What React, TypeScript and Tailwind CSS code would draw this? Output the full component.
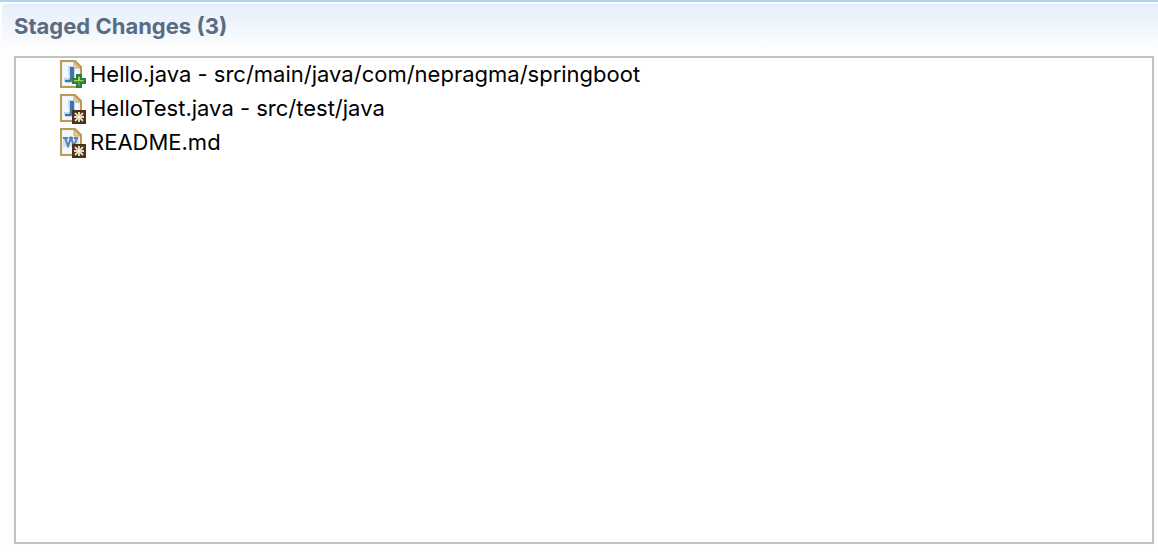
import React from "react";

type Kind = "java" | "text";
type Status = "added" | "modified";

interface StagedFile {
  label: string;
  kind: Kind;
  status: Status;
}

const files: StagedFile[] = [
  { label: "Hello.java - src/main/java/com/nepragma/springboot", kind: "java", status: "added" },
  { label: "HelloTest.java - src/test/java", kind: "java", status: "modified" },
  { label: "README.md", kind: "text", status: "modified" },
];

function FileIcon({ kind, status }: { kind: Kind; status: Status }) {
  return (
    <svg viewBox="0 0 28 32" className="h-8 w-7 shrink-0" aria-hidden="true">
      <path d="M2 2h15l7 7v21H2z" fill="#e9f1fb" />
      <path d="M5 5h10v5h6v17H5z" fill="#f3f8fe" />
      <path d="M3 3h14l6 6v20H3z" fill="none" stroke="#bd9a50" strokeWidth="2" />
      <path d="M16 4v6h6z" fill="#e6cf8e" stroke="#cdae6a" strokeWidth="1" />
      {kind === "java" ? (
        <>
          <path d="M10 8h7v13l-3 4H8l-2-2v-3h5z" fill="#c3d6ec" />
          <path d="M12 9h4v11c0 3-2 4-4 4H7v-2h3c2 0 2-1 2-3z" fill="#3f74ad" />
        </>
      ) : (
        <>
          <path d="M5 11h16v10H5z" fill="#d3e0f0" />
          <path
            d="M5 12h5M11 12h4M16 12h4M7 12l3 8 3-8 3 8 3-8"
            fill="none"
            stroke="#5782b5"
            strokeWidth="2"
          />
        </>
      )}
      {status === "added" ? (
        <>
          <path d="M18 16h6v4h4v6h-4v4h-6v-4h-4v-6h4z" fill="#2a7d45" />
          <path d="M20 18h2v4h4v2h-4v4h-2v-4h-4v-2h4z" fill="#4f9a4c" />
          <path d="M20 19h2v3h3v1H16v-1h4z" fill="#a9cf66" />
        </>
      ) : (
        <>
          <path d="M14 18h14v14H14z" fill="#49301f" />
          <path
            d="M21 20v10M16 25h10M17 21l8 8M25 21l-8 8"
            fill="none"
            stroke="#e6d6b8"
            strokeWidth="2"
          />
          <path d="M20 24h2v2h-2z" fill="#fffbe9" />
        </>
      )}
    </svg>
  );
}

export default function App() {
  return (
    <section className="flex min-h-screen flex-col bg-[#fdfdfd] font-['Inter','Liberation_Sans',sans-serif]">
      <header className="border-t-2 border-[#b1d1f3]">
        <div className="ml-0.5 mt-0.5 h-11 rounded-tl-sm bg-linear-to-b from-[#e4eefb] to-[#fdfdfd] px-3 pt-1">
          <h1 className="text-[22px] leading-9 font-bold text-[#586c84]">Staged Changes (3)</h1>
        </div>
      </header>
      <ul className="mt-2 mr-1 mb-2 ml-3.5 flex-1 border-2 border-[#c3c3c3] bg-white">
        {files.map((file) => (
          <li key={file.label} className="flex h-[34px] items-start gap-1 pl-[42px]">
            <FileIcon kind={file.kind} status={file.status} />
            <span className="text-[22px] leading-8 whitespace-nowrap text-black">{file.label}</span>
          </li>
        ))}
      </ul>
    </section>
  );
}
